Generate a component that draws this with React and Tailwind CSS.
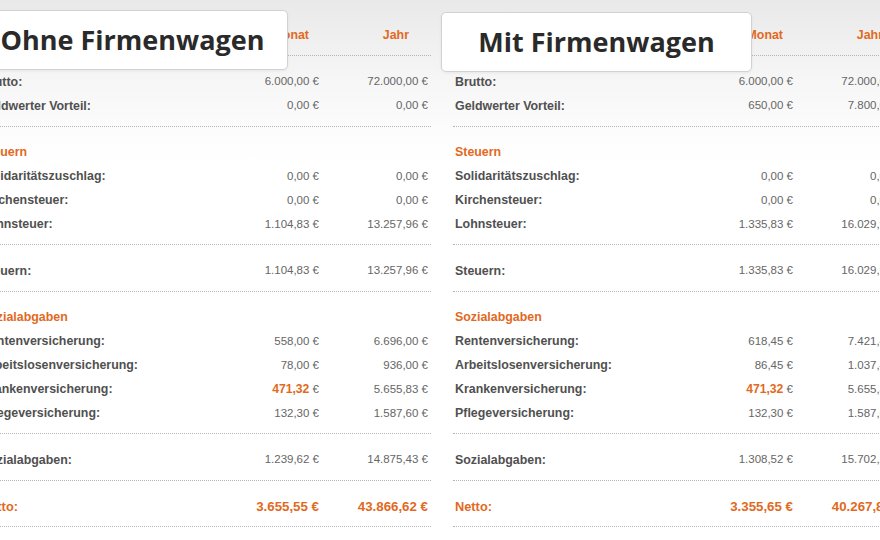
const ORANGE = "text-[#e2691d]";

const left = {
  title: "Ohne Firmenwagen",
  top: [
    ["Brutto:", "6.000,00 €", "72.000,00 €"],
    ["Geldwerter Vorteil:", "0,00 €", "0,00 €"],
  ],
  taxes: [
    ["Solidaritätszuschlag:", "0,00 €", "0,00 €"],
    ["Kirchensteuer:", "0,00 €", "0,00 €"],
    ["Lohnsteuer:", "1.104,83 €", "13.257,96 €"],
  ],
  taxTotal: ["Steuern:", "1.104,83 €", "13.257,96 €"],
  social: [
    ["Rentenversicherung:", "558,00 €", "6.696,00 €"],
    ["Arbeitslosenversicherung:", "78,00 €", "936,00 €"],
    ["Krankenversicherung:", "471,32", "5.655,83 €", true],
    ["Pflegeversicherung:", "132,30 €", "1.587,60 €"],
  ],
  socialTotal: ["Sozialabgaben:", "1.239,62 €", "14.875,43 €"],
  net: ["Netto:", "3.655,55 €", "43.866,62 €"],
};

const right = {
  title: "Mit Firmenwagen",
  top: [
    ["Brutto:", "6.000,00 €", "72.000,00 €"],
    ["Geldwerter Vorteil:", "650,00 €", "7.800,00 €"],
  ],
  taxes: [
    ["Solidaritätszuschlag:", "0,00 €", "0,00 €"],
    ["Kirchensteuer:", "0,00 €", "0,00 €"],
    ["Lohnsteuer:", "1.335,83 €", "16.029,96 €"],
  ],
  taxTotal: ["Steuern:", "1.335,83 €", "16.029,96 €"],
  social: [
    ["Rentenversicherung:", "618,45 €", "7.421,40 €"],
    ["Arbeitslosenversicherung:", "86,45 €", "1.037,40 €"],
    ["Krankenversicherung:", "471,32", "5.655,83 €", true],
    ["Pflegeversicherung:", "132,30 €", "1.587,60 €"],
  ],
  socialTotal: ["Sozialabgaben:", "1.308,52 €", "15.702,24 €"],
  net: ["Netto:", "3.355,65 €", "40.267,80 €"],
};

const ROW = "grid h-6 grid-cols-[1fr_110px_112px] items-center whitespace-nowrap";

function Divider() {
  return <div className="mb-[14px] mt-[7.5px] border-t border-dotted border-[#b4b4b4]" />;
}

function Row({ row }) {
  const [label, month, year, highlight] = row;
  return (
    <div className={ROW}>
      <span className="pl-[2px] text-[12.4px] font-bold text-[#505050]">{label}</span>
      <span className="text-right text-[11.5px] text-[#666]">
        {highlight ? (
          <>
            <span className={`text-[12.2px] font-bold ${ORANGE}`}>471,32</span> €
          </>
        ) : (
          month
        )}
      </span>
      <span className="pr-[3px] text-right text-[11.5px] text-[#666]">{year}</span>
    </div>
  );
}

function Heading({ children }) {
  return (
    <div className={ROW}>
      <span className={`pl-[2px] text-[12.4px] font-bold ${ORANGE}`}>{children}</span>
    </div>
  );
}

function Panel({ data }) {
  const [netLabel, netMonth, netYear] = data.net;
  return (
    <div className="w-[452px] shrink-0">
      {/* Column headers */}
      <div className={ROW}>
        <span />
        <span className={`pr-[10px] text-right text-[12.4px] font-bold ${ORANGE}`}>Monat</span>
        <span className={`pr-[22px] text-right text-[12.4px] font-bold ${ORANGE}`}>Jahr</span>
      </div>
      <Divider />

      {data.top.map((r) => <Row key={r[0]} row={r} />)}
      <Divider />

      <Heading>Steuern</Heading>
      {data.taxes.map((r) => <Row key={r[0]} row={r} />)}
      <Divider />
      <Row row={data.taxTotal} />
      <Divider />

      <Heading>Sozialabgaben</Heading>
      {data.social.map((r) => <Row key={r[0]} row={r} />)}
      <Divider />
      <Row row={data.socialTotal} />
      <Divider />

      <div className={`${ROW} font-bold ${ORANGE}`}>
        <span className="pl-[2px] text-[12.8px]">{netLabel}</span>
        <span className="text-right text-[13.3px]">{netMonth}</span>
        <span className="pr-[3px] text-right text-[13.3px]">{netYear}</span>
      </div>
      <Divider />
    </div>
  );
}

function TitleCard({ children, className }) {
  return (
    <div
      className={`absolute flex h-[60px] w-[311px] items-center justify-center rounded-[5px] border border-[#d2d2d2] bg-white shadow-[0_1px_3px_rgba(0,0,0,0.06)] font-['Open_Sans','Noto_Sans',sans-serif] text-[27px] font-bold text-[#2a2a2a] ${className}`}
    >
      {children}
    </div>
  );
}

export default function App() {
  return (
    <div className="relative h-[540px] w-[880px] overflow-hidden bg-[linear-gradient(to_bottom,#e9e9e9,#f6f6f6_80px,#ffffff_160px)] font-['Liberation_Sans',Arial,sans-serif]">
      <div className="-ml-[21px] flex gap-[22px] pt-[23.5px]">
        <Panel data={left} />
        <Panel data={right} />
      </div>

      <TitleCard className="left-[-23px] top-[10px]">{left.title}</TitleCard>
      <TitleCard className="left-[441px] top-[12px]">{right.title}</TitleCard>
    </div>
  );
}
